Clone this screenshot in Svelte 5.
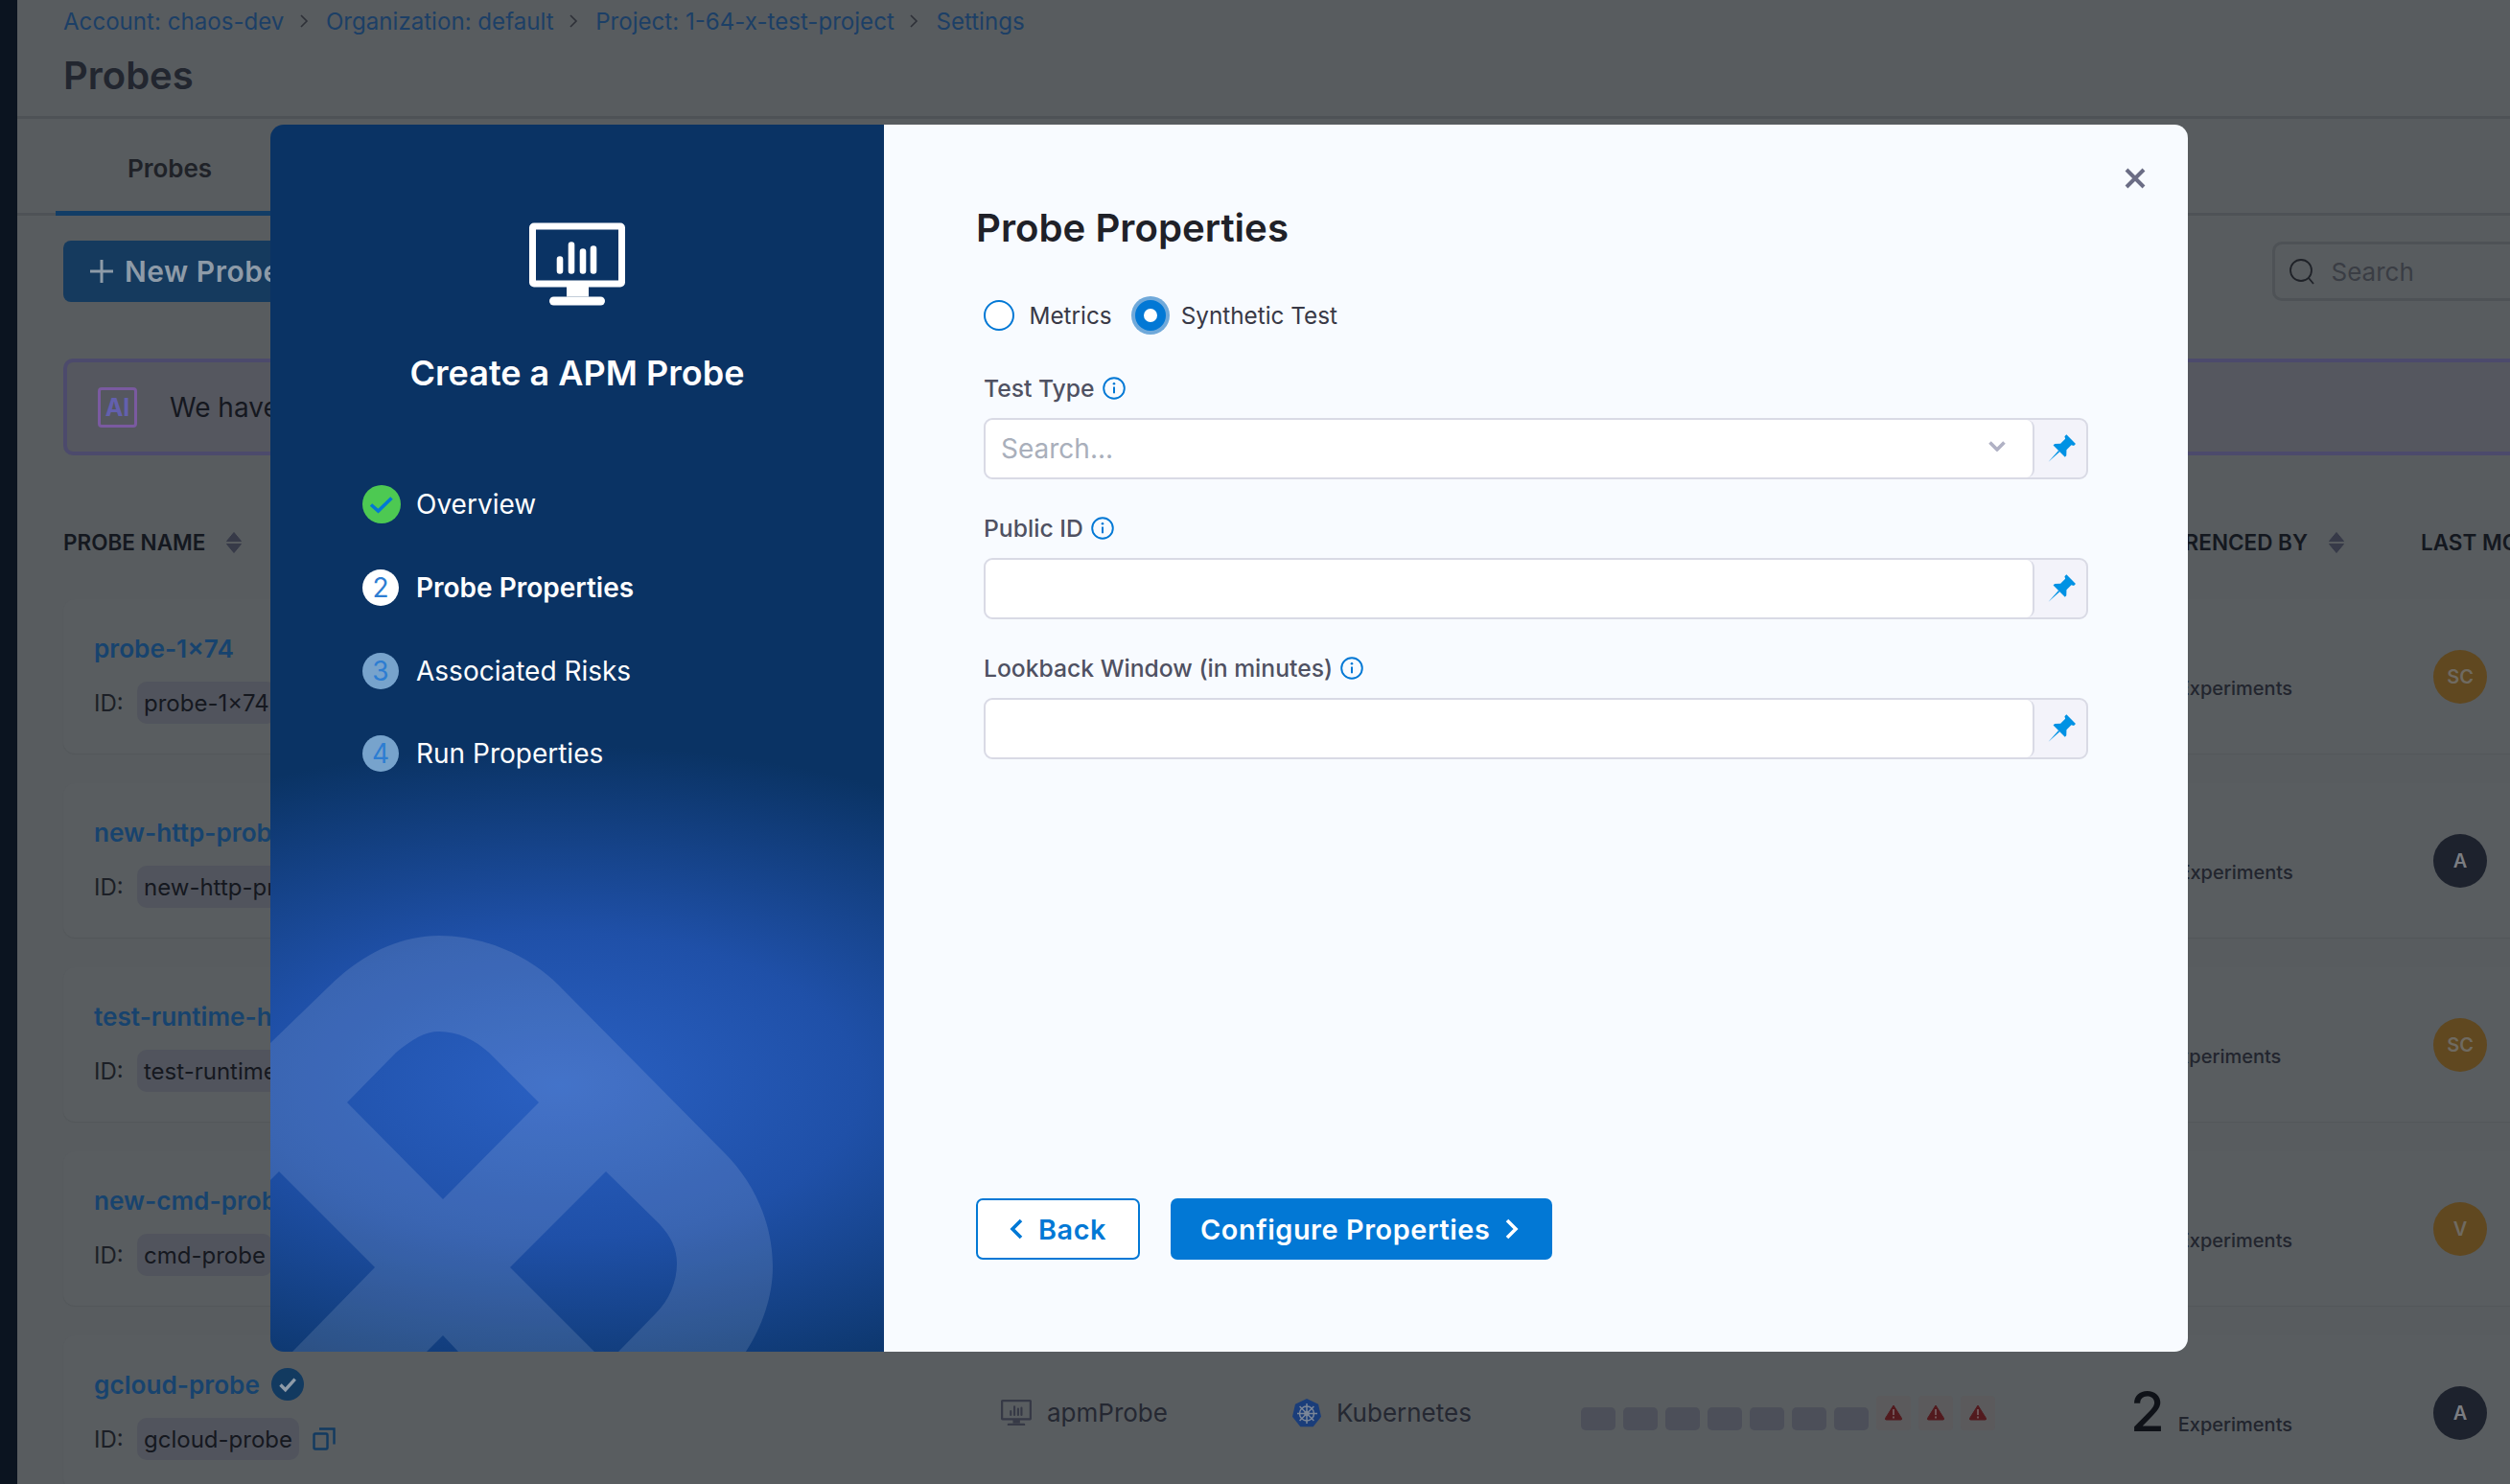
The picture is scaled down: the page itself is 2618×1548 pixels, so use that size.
<script>
  const crumbs = [
    "Account: chaos-dev",
    "Organization: default",
    "Project: 1-64-x-test-project",
    "Settings",
  ];

  const probes = [
    { name: "probe-1×74", id: "probe-1×74", count: 2, user: "SC", tone: "gold" },
    { name: "new-http-probe", id: "new-http-probe", count: 3, user: "A", tone: "navy" },
    { name: "test-runtime-http", id: "test-runtime-http", count: 1, user: "SC", tone: "gold" },
    { name: "new-cmd-probe", id: "cmd-probe", count: 2, user: "V", tone: "gold" },
    { name: "gcloud-probe", id: "gcloud-probe", count: 2, user: "A", tone: "navy", verified: true },
  ];

  const steps = [
    { label: "Overview", state: "done" },
    { label: "Probe Properties", state: "active" },
    { label: "Associated Risks", state: "todo" },
    { label: "Run Properties", state: "todo" },
  ];

  const fields = [
    { label: "Test Type", placeholder: "Search...", select: true },
    { label: "Public ID", placeholder: "" },
    { label: "Lookback Window (in minutes)", placeholder: "" },
  ];

  const bars = [0, 1, 2, 3, 4, 5, 6];
  const alerts = [0, 1, 2];
</script>

{#snippet monitor(size)}
  <svg class="monitor" width={size} viewBox="0 0 100 86" fill="none">
    <rect x="3.5" y="3.5" width="93" height="60" rx="1.5" stroke="currentColor" stroke-width="7" />
    <path d="M32 50V38M44 50V23M56 50V30M67 50V27" stroke="currentColor" stroke-width="6.6" stroke-linecap="round" />
    <path d="M39 66h23v11H39z" fill="currentColor" />
    <rect x="21" y="77" width="58" height="9" rx="4.5" fill="currentColor" />
  </svg>
{/snippet}

{#snippet sortIcon()}
  <svg class="sort" width="16" height="22" viewBox="0 0 16 22">
    <path d="M8 0.5 15.5 9.5H0.5zM8 21.5 0.5 12.5H15.5z" fill="#373a48" stroke="#373a48" stroke-linejoin="round" />
  </svg>
{/snippet}

{#snippet infoIcon()}
  <svg width="24" height="24" viewBox="0 0 24 24" fill="none">
    <circle cx="12" cy="12" r="10.8" stroke="#0278d5" stroke-width="1.9" />
    <path d="M12 10.6v6.6" stroke="#0278d5" stroke-width="2" />
    <circle cx="12" cy="7.2" r="1.3" fill="#0278d5" />
  </svg>
{/snippet}

{#snippet pinIcon()}
  <svg width="34" height="34" viewBox="-13 -13 26 26">
    <g transform="translate(-0.3 1.3) rotate(45)" fill="#0092e4">
      <path d="M-5.2 -12.5H5.2V-10.4L3.4 -9.4V-4L6.6 -0.6V1H-6.6V-0.6L-3.4 -4V-9.4L-5.2 -10.4Z" />
      <path d="M-0.7 1H0.7L0 13Z" />
    </g>
  </svg>
{/snippet}

<div class="page">
  <aside class="rail"></aside>

  <main class="main">
    <header class="head">
      <nav class="crumbs">
        {#each crumbs as crumb, i}
          <span class="crumb">{crumb}</span>
          {#if i < crumbs.length - 1}
            <svg width="10" height="16" viewBox="0 0 10 16" fill="none">
              <path d="M2 2l6 6-6 6" stroke="#2d3038" stroke-width="1.6" />
            </svg>
          {/if}
        {/each}
      </nav>
      <h1>Probes</h1>
    </header>

    <div class="tabs">
      <div class="tab">Probes</div>
    </div>

    <div class="toolbar">
      <button class="new-probe">
        <svg width="24" height="24" viewBox="0 0 24 24">
          <path d="M12 0v24M0 12h24" stroke="#8e9ba8" stroke-width="3" />
        </svg>
        New Probe
      </button>
      <div class="search">
        <svg width="28" height="28" viewBox="0 0 28 28" fill="none">
          <circle cx="13" cy="13" r="11" stroke="#1f2228" stroke-width="1.8" />
          <path d="M21 21l5 6" stroke="#1f2228" stroke-width="1.8" />
        </svg>
        <span>Search</span>
      </div>
    </div>

    <div class="content">
      <div class="banner">
        <span class="ai-mark">AI</span>
        <span>We have</span>
      </div>

      <div class="thead">
        <span class="th">PROBE NAME {@render sortIcon()}</span>
        <span class="th th-ref">REFERENCED BY {@render sortIcon()}</span>
        <span class="th">LAST MODIFIED</span>
      </div>

      {#each probes as probe}
        <div class="row">
          <div class="name-col">
            <div class="probe-name">
              {probe.name}
              {#if probe.verified}
                <svg width="34" height="34" viewBox="0 0 34 34">
                  <circle cx="17" cy="17" r="17" fill="#123a60" />
                  <path d="M9.5 17.5l5.2 5.2 10-11" fill="none" stroke="#8e9ba8" stroke-width="3.4" />
                </svg>
              {/if}
            </div>
            <div class="probe-id">
              <span class="id-key">ID:</span>
              <span class="chip">{probe.id}</span>
              <svg width="24" height="24" viewBox="0 0 24 24" fill="none" stroke="#123a60" stroke-width="2.4">
                <rect x="1.5" y="6.5" width="14" height="16" rx="1.5" />
                <path d="M7 1.5h15.500v16" />
              </svg>
            </div>
          </div>

          <div class="kind">
            {@render monitor(32)}
            <span>apmProbe</span>
          </div>

          <div class="kind">
            <svg width="30" height="30" viewBox="0 0 30 30" fill="none">
              <path d="M15 0 27 5.800 30 18.800 21.700 29.300H8.300L0 18.800 3 5.800Z" fill="#1a3d7a" />
              <g stroke="#7b8698" stroke-width="1.500">
                <circle cx="15" cy="15.500" r="7.500" />
                <circle cx="15" cy="15.500" r="2" />
                <path d="M15 5v21M5 15.500h21M7.600 8l14.800 15M22.400 8 7.600 23" />
              </g>
            </svg>
            <span>Kubernetes</span>
          </div>

          <div class="runs">
            {#each bars as bar (bar)}
              <span class="bar"></span>
            {/each}
            {#each alerts as alert (alert)}
              <span class="alert">
                <svg width="20" height="17" viewBox="0 0 20 17">
                  <path d="M10 1 18.500 14.500Q19 16 17.500 16H2.500Q1 16 1.500 14.500Z" fill="#521a1e" stroke="#521a1e" stroke-linejoin="round" />
                  <path d="M10 5v6M10 12.500v2" stroke="#7c6a6c" stroke-width="1.500" />
                </svg>
              </span>
            {/each}
          </div>

          <div class="refs">
            <span class="ref-count">{probe.count}</span>
            <span class="ref-label">Experiments</span>
          </div>

          <div class="avatar {probe.tone}">{probe.user}</div>
        </div>
      {/each}
    </div>
  </main>

  <section class="dialog">
    <div class="side">
      <svg class="mark" viewBox="282 130 640 1280">
        <path
          fill-rule="evenodd"
          d="M282 1088L342 1030C375 997 415 976 458 976C503 976 550 995 583 1028L757 1204C790 1238 806 1280 806 1322C806 1352 795 1384 778 1410H282Z
             M362 1150L413 1098C430 1084 443 1076 458 1076C477 1076 497 1085 512 1100L562 1150L462 1251Z
             M532 1322L632 1222L688 1277C700 1290 706 1303 706 1318C706 1337 698 1356 684 1370L645 1410H620Z
             M391 1322L291 1222L282 1231V1410H305Z
             M462 1393L445 1410H478Z"
          fill="#fff"
          fill-opacity="0.12"
        />
      </svg>

      <div class="side-icon">{@render monitor(100)}</div>
      <h2>Create a APM Probe</h2>

      <ol class="steps">
        {#each steps as step, i}
          <li class="step {step.state}">
            {#if step.state === "done"}
              <svg class="tick" width="40" height="40" viewBox="0 0 40 40">
                <circle cx="20" cy="20" r="20" fill="#4dc952" />
                <path d="M9 20.500l7.500 6.500 14-13.500" fill="none" stroke="#0278d5" stroke-width="3.600" />
              </svg>
            {:else}
              <span class="bubble">{i + 1}</span>
            {/if}
            <span>{step.label}</span>
          </li>
        {/each}
      </ol>
    </div>

    <div class="body">
      <button class="close" aria-label="Close">
        <svg width="22" height="22" viewBox="0 0 22 22">
          <path d="M2 2l18 18M20 2 2 20" stroke="#6b6d85" stroke-width="4" />
        </svg>
      </button>

      <h3>Probe Properties</h3>

      <div class="form">
        <div class="radios">
          <span class="radio"></span>
          <span>Metrics</span>
          <span class="radio on"></span>
          <span>Synthetic Test</span>
        </div>

        {#each fields as field}
          <div class="field">
            <div class="field-label">{field.label} {@render infoIcon()}</div>
            <div class="input-wrap">
              <div class="input">
                <span class="placeholder">{field.placeholder}</span>
                {#if field.select}
                  <svg width="18" height="11" viewBox="0 0 18 11" fill="none">
                    <path d="M1.500 1.500 9 9l7.500-7.500" stroke="#b0b1c4" stroke-width="3.600" />
                  </svg>
                {/if}
              </div>
              <div class="addon">{@render pinIcon()}</div>
            </div>
          </div>
        {/each}
      </div>

      <div class="actions">
        <button class="btn back">
          <svg width="14" height="24" viewBox="0 0 14 24" fill="none">
            <path d="M12 3 3 12l9 9" stroke="#0278d5" stroke-width="3.600" />
          </svg>
          Back
        </button>
        <button class="btn next">
          Configure Properties
          <svg width="14" height="24" viewBox="0 0 14 24" fill="none">
            <path d="M2 3l9 9-9 9" stroke="#fff" stroke-width="3.600" />
          </svg>
        </button>
      </div>
    </div>
  </section>
</div>

<style>
  :global(body) {
    margin: 0;
    background: #585c5f;
  }
  .page {
    position: relative;
    display: flex;
    width: 2618px;
    height: 1548px;
    overflow: hidden;
    background: #585c5f;
    font-family: Inter, "Noto Sans", sans-serif;
    color: #15181f;
  }
  .rail {
    flex: 0 0 18px;
    background: #0b1420;
  }
  .main {
    flex: 0 0 2800px;
  }
  .head {
    height: 124px;
    box-sizing: border-box;
    padding: 6px 0 0 48px;
    border-bottom: 3px solid #4e5256;
  }
  .crumbs {
    display: flex;
    align-items: center;
    height: 32px;
    gap: 15.5px;
    font-size: 24.1px;
    color: #1c3f66;
  }
  .crumbs svg {
    margin-right: 2.6px;
  }
  h1 {
    margin: 17px 0 0;
    font-size: 40px;
    line-height: 48px;
    font-weight: 600;
    color: #22262f;
  }
  .tabs {
    height: 101px;
    padding-left: 40px;
    box-sizing: border-box;
    border-bottom: 3px solid #4e5256;
  }
  .tab {
    width: 238px;
    height: 101px;
    box-sizing: border-box;
    padding-top: 35px;
    text-align: center;
    font-size: 26px;
    line-height: 34px;
    font-weight: 600;
    color: #1f2228;
    border-bottom: 5px solid #123d66;
  }
  .toolbar {
    display: flex;
    justify-content: space-between;
    align-items: center;
    box-sizing: border-box;
    width: 2752px;
    padding-left: 48px;
    height: 116px;
  }
  .new-probe {
    display: flex;
    align-items: center;
    gap: 12px;
    width: 330px;
    height: 64px;
    padding: 0 0 0 28px;
    border: 0;
    border-radius: 8px;
    background: #153a5e;
    color: #8e9ba8;
    font: 600 30px Inter, sans-serif;
    letter-spacing: 0.5px;
  }
  .search {
    display: flex;
    align-items: center;
    gap: 16.5px;
    width: 400px;
    height: 62px;
    box-sizing: border-box;
    padding-left: 14px;
    border: 3px solid #4e5256;
    border-radius: 10px;
    font-size: 26px;
    color: #3a3d44;
  }
  .content {
    width: 2706px;
    margin-left: 48px;
  }
  .banner {
    display: flex;
    align-items: center;
    gap: 34px;
    height: 101px;
    box-sizing: border-box;
    margin-top: 33px;
    padding-left: 32px;
    border: 4px solid #4c4a6c;
    border-radius: 10px;
    background: #55575f;
    font-size: 28px;
    color: #15181f;
  }
  .ai-mark {
    width: 41px;
    height: 42px;
    box-sizing: border-box;
    display: flex;
    align-items: center;
    justify-content: center;
    border: 3px solid #7a5aa0;
    border-radius: 4px;
    font-size: 25px;
    font-weight: 700;
    color: #6360ae;
  }
  .thead {
    display: grid;
    grid-template-columns: 2379px auto;
    column-gap: 80px;
    align-items: center;
    margin: 76px 0 44px;
  }
  .thead .th:first-child,
  .thead .th-ref {
    grid-row: 1;
    grid-column: 1;
  }
  .thead .th-ref {
    justify-self: end;
  }
  .th {
    display: inline-flex;
    align-items: center;
    gap: 22px;
    font-size: 22.5px;
    line-height: 30px;
    font-weight: 600;
    color: #14181f;
    white-space: nowrap;
  }
  .row {
    display: grid;
    grid-template-columns: 946px 304px 301px 576px 313px 56px;
    align-items: center;
    height: 161px;
    box-sizing: border-box;
    margin-bottom: 31px;
    padding-left: 32px;
    border-radius: 12px;
    background: #595d60;
    box-shadow: 0 1px 1px rgba(0, 0, 0, 0.06);
  }
  .name-col {
    display: flex;
    flex-direction: column;
    gap: 15px;
  }
  .probe-name {
    display: flex;
    align-items: center;
    gap: 12px;
    height: 40px;
    font-size: 26.2px;
    font-weight: 600;
    color: #17436e;
  }
  .probe-id {
    display: flex;
    align-items: center;
    font-size: 24px;
    height: 44px;
  }
  .id-key {
    width: 45px;
    color: #1c1f26;
  }
  .chip {
    display: flex;
    align-items: center;
    height: 44px;
    padding: 0 7px;
    margin-right: 14px;
    border-radius: 10px;
    background: #51545d;
    color: #15181f;
  }
  .kind {
    display: flex;
    align-items: center;
    gap: 16px;
    font-size: 26px;
    color: #252832;
  }
  .kind .monitor {
    color: #363946;
  }
  .runs {
    display: flex;
    align-items: flex-end;
    gap: 8px;
  }
  .bar {
    width: 36px;
    height: 24px;
    border-radius: 5px;
    background: #4c4f59;
  }
  .alert {
    display: flex;
    align-items: center;
    justify-content: center;
    width: 36px;
    height: 36px;
    border-radius: 4px;
    background: #5b5a5c;
  }
  .refs {
    display: flex;
    align-items: baseline;
    gap: 14px;
    margin: -3px 0 0 -3px;
  }
  .ref-count {
    font-size: 58px;
    line-height: 58px;
    font-weight: 500;
    color: #0f1218;
  }
  .ref-label {
    font-size: 20px;
    font-weight: 500;
    color: #22252e;
  }
  .avatar {
    display: flex;
    align-items: center;
    justify-content: center;
    width: 56px;
    height: 56px;
    border-radius: 50%;
    font-size: 20px;
    font-weight: 600;
  }
  .gold {
    background: #604820;
    color: #6f6a61;
  }
  .navy {
    background: #1d222d;
    color: #7b7d82;
  }

  .dialog {
    position: absolute;
    left: 282px;
    top: 130px;
    display: flex;
    width: 2000px;
    height: 1280px;
    border-radius: 14px;
    overflow: hidden;
  }
  .side {
    position: relative;
    flex: 0 0 640px;
    box-sizing: border-box;
    padding-top: 102px;
    overflow: hidden;
    color: #fff;
    background: radial-gradient(ellipse 700px 355px at 301px 1002px, #2a60c2 0%, #1f50a8 45%, #0a3364 100%);
  }
  .mark {
    position: absolute;
    inset: 0;
    width: 640px;
    height: 1280px;
  }
  .side-icon {
    position: relative;
    display: flex;
    justify-content: center;
    height: 87px;
    color: #fff;
  }
  h2 {
    position: relative;
    margin: 46px 0 0;
    text-align: center;
    font-size: 36px;
    line-height: 48px;
    font-weight: 600;
  }
  .steps {
    position: relative;
    display: flex;
    flex-direction: column;
    gap: 46.8px;
    margin: 93px 0 0;
    padding: 0 0 0 96px;
    list-style: none;
  }
  .step {
    display: flex;
    align-items: center;
    gap: 16px;
    height: 40px;
    font-size: 28px;
    font-weight: 400;
  }
  .step.active {
    font-weight: 600;
  }
  .bubble {
    display: flex;
    align-items: center;
    justify-content: center;
    width: 38px;
    height: 38px;
    margin-right: 2px;
    border-radius: 50%;
    background: #77a3cc;
    color: #2d7dd2;
    font-size: 28px;
    font-weight: 400;
  }
  .active .bubble {
    background: #fff;
  }

  .body {
    position: relative;
    flex: 1;
    display: flex;
    flex-direction: column;
    box-sizing: border-box;
    padding: 84px 0 96px 96px;
    background: #f8fbff;
  }
  .close {
    position: absolute;
    top: 45px;
    right: 44px;
    display: flex;
    padding: 0;
    border: 0;
    background: none;
  }
  h3 {
    margin: 0;
    font-size: 40.2px;
    line-height: 48px;
    font-weight: 600;
    color: #1f2128;
  }
  .form {
    padding-left: 8px;
    width: 1152px;
  }
  .radios {
    display: flex;
    align-items: center;
    height: 40px;
    margin-top: 47px;
    font-size: 24.3px;
    color: #383946;
  }
  .radio {
    width: 32px;
    height: 32px;
    box-sizing: border-box;
    margin-right: 15.5px;
    border: 2.500px solid #0278d5;
    border-radius: 50%;
    background: #fff;
  }
  .radio.on {
    margin-left: 24px;
    margin-right: 16px;
    border: 9px solid #0278d5;
    box-shadow: 0 0 0 4px #70a9da;
  }
  .field {
    margin-top: 38px;
  }
  .field + .field {
    margin-top: 33px;
  }
  .field-label {
    display: flex;
    align-items: center;
    gap: 8px;
    height: 36px;
    font-size: 24.7px;
    font-weight: 500;
    color: #4f5162;
  }
  .input-wrap {
    display: flex;
    height: 64px;
    box-sizing: border-box;
    margin-top: 13px;
    border: 2.500px solid #d9dae5;
    border-radius: 9px;
    background: #f3f3fa;
  }
  .input {
    flex: 1;
    display: flex;
    align-items: center;
    justify-content: space-between;
    box-sizing: border-box;
    padding: 0 28px 0 16px;
    border-right: 2.500px solid #d9dae5;
    border-radius: 8px;
    background: #fff;
  }
  .input svg {
    margin-top: -6px;
  }
  .placeholder {
    font-size: 28px;
    color: #a9afbb;
  }
  .addon {
    flex: 0 0 54px;
    display: flex;
    align-items: center;
    justify-content: center;
  }
  .actions {
    display: flex;
    gap: 32px;
    margin-top: auto;
  }
  .btn {
    display: flex;
    align-items: center;
    box-sizing: border-box;
    height: 64px;
    border-radius: 7px;
    font: 600 28.8px Inter, sans-serif;
    letter-spacing: 0.6px;
  }
  .back {
    gap: 16px;
    width: 171px;
    padding: 0 0 0 33px;
    border: 2.500px solid #0278d5;
    background: #fff;
    color: #0278d5;
  }
  .next {
    gap: 16px;
    width: 398px;
    padding: 0 0 0 31px;
    border: 0;
    background: #0278d5;
    color: #fff;
  }
</style>
